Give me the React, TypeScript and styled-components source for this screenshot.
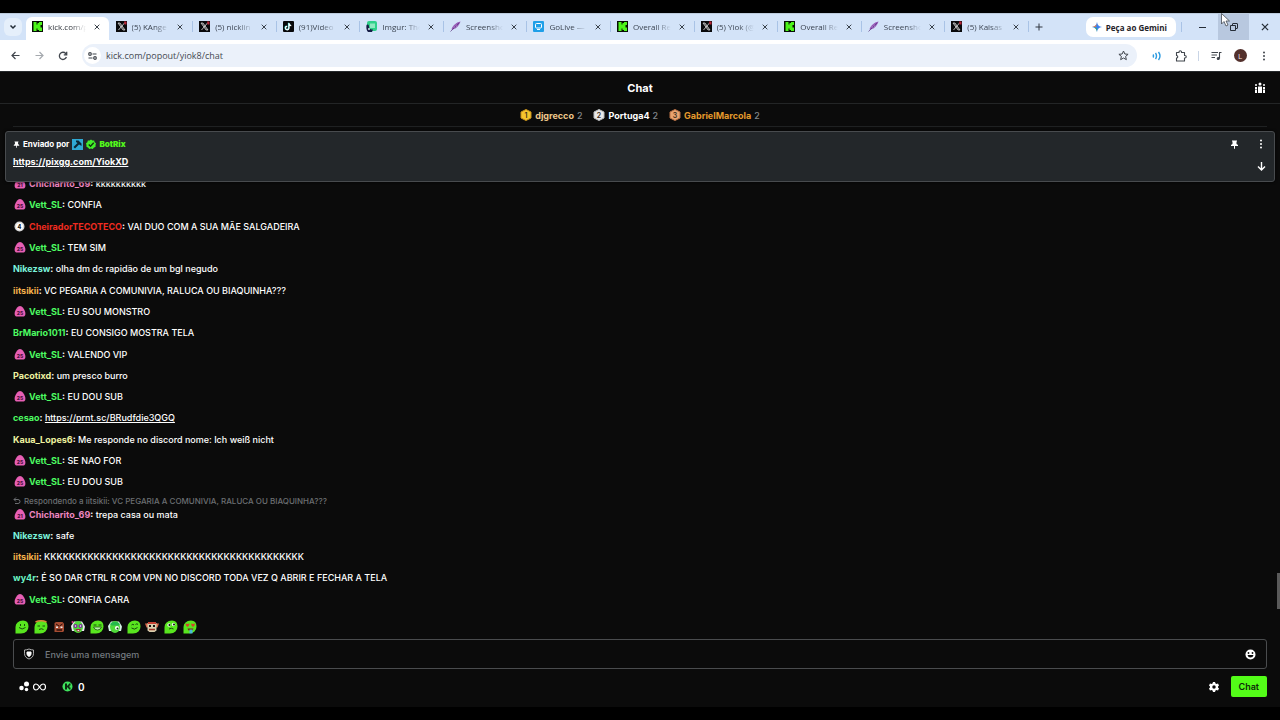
import React from "react";
import styled, { createGlobalStyle } from "styled-components";

const GlobalStyle = createGlobalStyle`
  *, *::before, *::after { box-sizing: border-box; }
  body { margin: 0; background: #000; }
  button, input { font: inherit; color: inherit; }
  button { border: 0; padding: 0; background: none; cursor: pointer; }
  svg { display: block; flex: none; }
`;

const ui = `"Open Sans", "Noto Sans", sans-serif`;
const inter = `Inter, "Liberation Sans", sans-serif`;

const Screen = styled.div`
  min-height: 100vh;
  display: flex;
  flex-direction: column;
  padding: 13px 0;
  background: #000;
  overflow: hidden;
`;

/* ---------- browser chrome ---------- */

const TabStrip = styled.div`
  display: flex;
  align-items: stretch;
  height: 27px;
  background: #d3e3f8;
  border-top: 1px solid #bccbdc;
  font-family: ${ui};
  font-size: 8px;
  color: #3b4451;
`;

const TabSearch = styled.button`
  align-self: center;
  display: grid;
  place-items: center;
  width: 18px;
  height: 18px;
  margin: 0 4px;
  border-radius: 6px;
  background: #e5effb;
  color: #222b36;
`;

const Tabs = styled.div`
  display: flex;
  flex: 0 1 1003px;
  min-width: 0;
  padding-top: 3px;
`;

const TabItem = styled.div<{ $active?: boolean }>`
  position: relative;
  flex: 1 1 0;
  min-width: 0;
  display: flex;
  align-items: center;
  gap: 5px;
  padding: 0 7px 4px 6px;
  ${(p) =>
    p.$active
      ? `background: #fff; border-radius: 6px 6px 0 0; margin-right: 1px; color: #2c3138; padding-right: 6px;`
      : `&::after { content: ""; position: absolute; right: 0; top: 4px; width: 1px; height: 11px; background: #a9c3e6; }`}
`;

const TabTitle = styled.span`
  flex: 1;
  min-width: 0;
  overflow: hidden;
  white-space: nowrap;
  line-height: 12px;
  mask-image: linear-gradient(90deg, #000 60%, transparent);
`;

const TabClose = styled.button`
  display: grid;
  place-items: center;
  width: 12px;
  height: 12px;
  color: #303740;
`;

const NewTab = styled.button`
  display: grid;
  place-items: center;
  width: 20px;
  color: #303740;
`;

const WindowArea = styled.div`
  display: flex;
  margin-left: auto;
`;

const GeminiButton = styled.button`
  display: flex;
  align-items: center;
  align-self: center;
  gap: 4px;
  height: 20px;
  padding: 0 9px 0 6px;
  border-radius: 7px;
  background: #fff;
  color: #1f2329;
  font-size: 8px;
  font-weight: 700;
  white-space: nowrap;
`;

const Divider = styled.span<{ $color: string }>`
  align-self: center;
  width: 1px;
  height: 10px;
  margin: 0 5px;
  background: ${(p) => p.$color};
`;

const WindowButton = styled.button<{ $hover?: boolean }>`
  display: grid;
  place-items: center;
  width: 31px;
  color: #252c36;
  background: ${(p) => (p.$hover ? "#b8c8df" : "transparent")};
`;

const Toolbar = styled.div`
  display: flex;
  align-items: center;
  height: 31px;
  padding: 0 4px 0 3px;
  background: #fff;
  color: #41464d;
`;

const ToolButton = styled.button`
  display: grid;
  place-items: center;
  width: 24px;
  height: 22px;
`;

const AddressBar = styled.label`
  flex: 1;
  display: flex;
  align-items: center;
  gap: 5px;
  height: 23px;
  margin: 0 8px 0 7px;
  padding: 0 2px;
  border-radius: 12px;
  background: #ebf1fa;
  font-family: ${ui};
  font-size: 9px;
`;

const SiteInfo = styled.span`
  display: grid;
  place-items: center;
  width: 17px;
  height: 17px;
  border-radius: 50%;
  background: #fff;
`;

const AddressInput = styled.input`
  flex: 1;
  min-width: 0;
  border: 0;
  padding: 0;
  outline: 0;
  background: none;
  color: #454a52;
`;

const Avatar = styled.span`
  display: grid;
  place-items: center;
  width: 13px;
  height: 13px;
  border-radius: 50%;
  background: #53302c;
  color: #f2e6e4;
  font: 8px/13px ${ui};
`;

const Cursor = styled.svg`
  position: absolute;
  top: 13px;
  right: 50px;
`;

/* ---------- chat ---------- */

const Chat = styled.main`
  flex: 1;
  display: flex;
  flex-direction: column;
  background: #0b0b0b;
  color: #fff;
  font-family: ${inter};
  font-size: 9px;
  font-weight: 500;
  border-top: 1px solid #26292c;
`;

const ChatHeader = styled.header`
  display: grid;
  grid-template-columns: 1fr auto 1fr;
  align-items: center;
  height: 32px;
  padding: 0 14px;
  border-bottom: 1px solid #232526;
`;

const Title = styled.h1`
  grid-column: 2;
  margin: 0;
  font-size: 11px;
  font-weight: 700;
`;

const Viewers = styled.button`
  justify-self: end;
`;

const Leaderboard = styled.ol`
  display: flex;
  justify-content: center;
  align-items: center;
  gap: 11px;
  height: 23px;
  margin: 0 13px 4px;
  padding: 0;
  list-style: none;
  border-bottom: 1px solid #1f2122;
  color: #83888c;
`;

const Leader = styled.li<{ $color: string }>`
  display: flex;
  align-items: center;
  gap: 3px;
  b { color: ${(p) => p.$color}; font-weight: 700; }
`;

const Pinned = styled.section`
  position: relative;
  z-index: 1;
  display: flex;
  justify-content: space-between;
  height: 51px;
  margin: 0 5px;
  padding: 6px 7px;
  border: 1px solid #484b4e;
  border-radius: 3px;
  background: #23272a;
  box-shadow: 0 0 3px #000;
`;

const PinnedBy = styled.div`
  display: flex;
  align-items: center;
  gap: 3px;
  height: 12px;
  margin-bottom: 6px;
  font-size: 8px;
  font-weight: 700;
  b { color: #53f71c; }
`;

const ChatLink = styled.a<{ $strong?: boolean }>`
  color: inherit;
  font-weight: ${(p) => (p.$strong ? 700 : 500)};
  text-decoration: underline;
`;

const PinnedActions = styled.div`
  display: grid;
  grid-template-columns: 12px 12px;
  gap: 10px 15px;
  align-content: start;
  button { display: grid; place-items: center; height: 12px; }
  button:last-child { grid-column: 2; }
`;

const MessageArea = styled.section`
  position: relative;
  flex: 1;
  display: flex;
  margin-top: -9px;
`;

const Messages = styled.ul`
  flex: 1;
  display: flex;
  flex-direction: column;
  margin: 0;
  padding: 0 13px;
  list-style: none;
`;

const MessageItem = styled.li`
  flex: 1 0 auto;
  display: flex;
  flex-direction: column;
  justify-content: center;
`;

const Reply = styled.div`
  display: flex;
  align-items: center;
  gap: 3px;
  height: 11px;
  margin: 3px 0 -3px;
  color: #6c6f72;
  font-size: 8px;
`;

const Line = styled.div`
  display: flex;
  align-items: center;
  height: 21px;
`;

const BadgeSlot = styled.span`
  display: flex;
  width: 16px;
  padding-left: 1px;
`;

const Name = styled.b<{ $color: string }>`
  color: ${(p) => p.$color};
  font-weight: 700;
`;

const ScrollThumb = styled.div`
  position: absolute;
  right: 0;
  bottom: 1px;
  width: 3px;
  height: 36px;
  background: #5a5a5a;
`;

const Emotes = styled.div`
  display: grid;
  grid-template-columns: repeat(10, 1fr);
  justify-items: center;
  align-items: center;
  width: 186px;
  height: 18px;
  margin: 8px 13px 3px;
`;

const Composer = styled.form`
  padding: 0 13px 10px;
`;

const Field = styled.label`
  display: flex;
  align-items: center;
  gap: 10px;
  height: 30px;
  padding: 0 10px 0 9px;
  border: 1px solid #4a4c4e;
  border-radius: 3px;
`;

const MessageInput = styled.input`
  flex: 1;
  min-width: 0;
  border: 0;
  padding: 0;
  outline: 0;
  background: none;
  font-size: 9px;
  &::placeholder { color: #757b80; opacity: 1; }
`;

const ComposerFooter = styled.div`
  display: flex;
  align-items: center;
  margin-top: 7px;
  padding-left: 6px;
`;

const Points = styled.button`
  display: flex;
  align-items: center;
  gap: 3px;
  font-size: 10px;
  font-weight: 600;
`;

const KickPoints = styled(Points)`
  gap: 5px;
  margin: 0 auto 0 16px;
`;

const SendButton = styled.button`
  height: 21px;
  margin-left: 11px;
  padding: 0 8px;
  border-radius: 2px;
  background: #53fc18;
  color: #0c2a08;
  font-size: 9px;
  font-weight: 600;
`;

/* ---------- drawings ---------- */

const CloseIcon = ({ size = 7 }: { size?: number }) => (
  <svg width={size} height={size} viewBox="0 0 7 7" fill="none" stroke="currentColor" strokeWidth="1.1">
    <path d="M.8.8l5.4 5.4M6.2.8L.8 6.2" />
  </svg>
);

type SiteKind = "kick" | "x" | "tiktok" | "imgur" | "feather" | "golive";

const SiteIcon = ({ kind }: { kind: SiteKind }) => (
  <svg width="11" height="11" viewBox="0 0 22 22">
    {kind === "kick" && (
      <>
        <path d="M0 0h22v22H0z" fill="#081006" />
        <path d="M3 2h6v5h2V4h3V2h6v6h-3v5h3v7h-6v-2h-3v-3H9v5H3z" fill="#4cf51a" />
      </>
    )}
    {kind === "x" && (
      <>
        <path d="M0 0h22v22H0z" fill="#0a0a0c" />
        <path d="M4 4h4l10 14h-4z" fill="#555" stroke="#d8d8d8" strokeWidth="1.5" />
        <path d="M17 4L5 18" stroke="#d8d8d8" strokeWidth="1.7" />
        <path d="M16 1h5v6h-4z" fill="#ba2638" />
      </>
    )}
    {kind === "tiktok" && (
      <>
        <rect width="22" height="22" rx="2" fill="#08080a" />
        <path d="M12 4v10a3.5 3.5 0 1 1-3.5-3.5M12 4.5c0 3 2 4.5 4.500 4.500" fill="none" stroke="#28e0dc" strokeWidth="2.5" transform="translate(-1 -.5)" />
        <path d="M12 4v10a3.5 3.5 0 1 1-3.5-3.5M12 4.5c0 3 2 4.5 4.500 4.500" fill="none" stroke="#fff" strokeWidth="2.5" />
      </>
    )}
    {kind === "imgur" && (
      <>
        <rect x="2" width="20" height="20" rx="4" fill="#2fd08a" />
        <path d="M8 5h10v9H8z" fill="#8eeac1" />
        <path d="M1 8c4-2 5 0 5 4s4 5 8 5l-2 5H4c-3-3-4-9-3-14z" fill="#171f47" />
        <circle cx="6" cy="16" r="2" fill="#d6e8ef" />
      </>
    )}
    {kind === "feather" && (
      <>
        <path d="M21 1C12 3 5 9 3 17c7 0 14-5 18-16z" fill="#9357b5" />
        <path d="M1 21L18 4" stroke="#5c3480" strokeWidth="1.4" />
        <path d="M8 10l1 5M12 7l1 5" stroke="#c3a0d8" />
      </>
    )}
    {kind === "golive" && (
      <>
        <rect width="22" height="22" rx="2" fill="#1f9fe8" />
        <rect x="5" y="5" width="12" height="9" rx="2" fill="none" stroke="#fff" strokeWidth="2" />
        <path d="M8 17h6" stroke="#fff" strokeWidth="2" />
      </>
    )}
  </svg>
);

const HexMedal = ({ fill, edge, rank }: { fill: string; edge: string; rank: number }) => (
  <svg width="12" height="12" viewBox="0 0 24 24">
    <path d="M12 1l10 5v12l-10 5-10-5V6z" fill={fill} stroke={edge} strokeWidth="2" strokeLinejoin="round" />
    <text x="12" y="17" textAnchor="middle" fontSize="14" fontWeight="600" fill="#3a2c1a">{rank}</text>
  </svg>
);

const SubBadge = ({ label }: { label: string }) =>
  label === "4" ? (
    <svg width="11" height="11" viewBox="0 0 22 22">
      <circle cx="11" cy="11" r="10" fill="#d9d9d9" />
      <circle cx="11" cy="11" r="7" fill="#fff" />
      <text x="11" y="15" textAnchor="middle" fontSize="11" fontWeight="800" fill="#111">4</text>
    </svg>
  ) : (
    <svg width="12" height="11" viewBox="0 0 24 22">
      <path d="M12 0C7 0 4 5 2 11c-2 6 0 10 4 10h12c4 0 6-4 4-10C20 5 17 0 12 0z" fill="#e75fb4" />
      <text x="12" y="17" textAnchor="middle" fontSize="10" fontWeight="800" fill="#4a0d3a">{label}</text>
    </svg>
  );

const PinIcon = ({ size = 9 }: { size?: number }) => (
  <svg width={size} height={size} viewBox="0 0 18 18" fill="currentColor">
    <path d="M4 1h10v2h-1v5l3 2v2h-6v5l-1 1-1-1v-5H2v-2l3-2V3H4z" />
  </svg>
);

const DotsIcon = () => (
  <svg width="4" height="12" viewBox="0 0 4 12" fill="currentColor">
    <circle cx="2" cy="2.5" r="1" /><circle cx="2" cy="6" r="1" /><circle cx="2" cy="9.500" r="1" />
  </svg>
);

type EmoteKind = "smile" | "halo" | "box" | "clown" | "grin" | "cap" | "calm" | "ears" | "think" | "love";
const blob = "M5 5Q9 1 16 1q11 0 11 12 0 6-4 10-4 4-11 4H1V14q0-6 4-9z";

const Emote = ({ kind }: { kind: EmoteKind }) => (
  <svg width="14" height="14" viewBox="0 0 28 28">
    {kind === "box" ? (
      <>
        <path d="M5 6l3-2h13l3 3v15l-2 2H5z" fill="#a64c32" />
        <path d="M8 8l6 4M21 8l-6 4" stroke="#2b0e09" strokeWidth="2" />
        <path d="M8 13h4v3H8zM17 13h4v3h-4z" fill="#eee" />
        <path d="M9 20h11" stroke="#2b0e09" strokeWidth="3" />
      </>
    ) : kind === "ears" ? (
      <>
        <path d="M0 7h28l-3 8H3z" fill="#dc6a4d" />
        <path d="M5 6h18v15l-4 3H9l-4-3z" fill="#d9cfae" />
        <path d="M6 4h16v4H6z" fill="#c64233" />
        <path d="M8 10h4v4H8zM16 10h4v4h-4z" fill="#1a1110" />
        <path d="M8 19h12" stroke="#a03527" strokeWidth="3" />
      </>
    ) : (
      <>
        {(kind === "clown" || kind === "cap") && (
          <path d="M6 3h16l6 10-2 9H2L0 12z" fill={kind === "clown" ? "#ece6f2" : "#d4f4e6"} />
        )}
        {kind === "clown" || kind === "cap" ? (
          <ellipse cx="14" cy="14" rx="10" ry="12" fill="#4fd93a" />
        ) : (
          <path d={blob} fill="#58e51f" />
        )}
        {kind === "smile" && <path d="M11 8v4M19 8v4M8 15q6 6 13 0" stroke="#174c0a" strokeWidth="2" fill="none" />}
        {kind === "halo" && (
          <>
            <path d="M3 4q11-5 22 0" stroke="#d8863a" strokeWidth="3" fill="none" />
            <path d="M7 12h5M17 12h5M10 19q5-3 9 0" stroke="#174c0a" strokeWidth="2" fill="none" />
          </>
        )}
        {kind === "clown" && (
          <>
            <circle cx="9" cy="12" r="4" fill="#7a2b9c" /><circle cx="19" cy="12" r="4" fill="#7a2b9c" />
            <circle cx="9" cy="12" r="1.5" fill="#fff" /><circle cx="19" cy="12" r="1.5" fill="#fff" />
            <path d="M10 19h9l-4 5z" fill="#eee" stroke="#a0243e" strokeWidth="2" />
            <circle cx="3" cy="4" r="2" fill="#d93f83" />
          </>
        )}
        {kind === "grin" && (
          <>
            <path d="M7 10h6M17 10h6" stroke="#174c0a" strokeWidth="2" />
            <path d="M7 14h16q-2 6-8 6t-8-6z" fill="#b9f3a6" stroke="#174c0a" strokeWidth="1.5" />
          </>
        )}
        {kind === "cap" && (
          <>
            <path d="M4 8q9-9 20 0l-3 3H7z" fill="#24b84c" />
            <circle cx="18" cy="16" r="4" fill="#fff" /><circle cx="19" cy="17" r="2" fill="#123a14" />
          </>
        )}
        {kind === "calm" && <path d="M9 10q3-3 5 0M17 9q3-3 5 0M9 16q6 5 12-1" stroke="#174c0a" strokeWidth="2" fill="none" />}
        {kind === "think" && (
          <>
            <circle cx="10" cy="10" r="3.500" fill="#e9fbe2" /><circle cx="19" cy="9" r="3.500" fill="#e9fbe2" />
            <circle cx="11" cy="10" r="2" fill="#111" /><circle cx="20" cy="9" r="2" fill="#111" />
            <path d="M10 18q5-3 9 0" stroke="#174c0a" strokeWidth="2" fill="none" />
          </>
        )}
        {kind === "love" && (
          <>
            <path d="M5 7l4 1 4-1-1 4-3 3-3-3zM16 7l4 1 4-1-1 4-3 3-3-3z" fill="#d8402b" />
            <path d="M9 17h12l-2 4h-8z" fill="#7c2413" />
            <path d="M13 19h6v8h-6z" fill="#48b8d8" />
          </>
        )}
      </>
    )}
  </svg>
);

/* ---------- data ---------- */

const tabs: { icon: SiteKind; title: string }[] = [
  { icon: "kick", title: "kick.com/p" },
  { icon: "x", title: "(5) KAnge" },
  { icon: "x", title: "(5) nicklin" },
  { icon: "tiktok", title: "(91)Vídeo" },
  { icon: "imgur", title: "Imgur: The" },
  { icon: "feather", title: "Screensho" },
  { icon: "golive", title: "GoLive —" },
  { icon: "kick", title: "Overall Re" },
  { icon: "x", title: "(5) Yiok (@" },
  { icon: "kick", title: "Overall Re" },
  { icon: "feather", title: "Screensho" },
  { icon: "x", title: "(5) Kaisas" },
];

type Message = { name: string; color: string; text: string; badge?: string; link?: boolean; reply?: string };

const vett = (text: string): Message => ({ name: "Vett_SL", color: "#4dfb62", text, badge: "25" });
const niko = (text: string): Message => ({ name: "Nikezsw", color: "#7bf3dc", text });
const chicharito = (text: string, reply?: string): Message => ({
  name: "Chicharito_69", color: "#ee86c0", text, badge: "21", reply,
});

const messages: Message[] = [
  chicharito("kkkkkkkkkk"),
  vett("CONFIA"),
  { name: "CheiradorTECOTECO", color: "#ef2b20", text: "VAI DUO COM A SUA MÃE SALGADEIRA", badge: "4" },
  vett("TEM SIM"),
  niko("olha dm dc rapidão de um bgl negudo"),
  { name: "iitsikii", color: "#f5b34c", text: "VC PEGARIA A COMUNIVIA, RALUCA OU BIAQUINHA???" },
  vett("EU SOU MONSTRO"),
  { name: "BrMario1011", color: "#4dfb62", text: "EU CONSIGO MOSTRA TELA" },
  vett("VALENDO VIP"),
  { name: "Pacotixd", color: "#eef2a0", text: "um presco burro" },
  vett("EU DOU SUB"),
  { name: "cesao", color: "#4dfb62", text: "https://prnt.sc/BRudfdie3QGQ", link: true },
  { name: "Kaua_Lopes6", color: "#eef2a0", text: "Me responde no discord nome: Ich weiß nicht" },
  vett("SE NAO FOR"),
  vett("EU DOU SUB"),
  chicharito("trepa casa ou mata", "Respondendo a iitsikii: VC PEGARIA A COMUNIVIA, RALUCA OU BIAQUINHA???"),
  niko("safe"),
  { name: "iitsikii", color: "#f5b34c", text: "KKKKKKKKKKKKKKKKKKKKKKKKKKKKKKKKKKKKKKKKKK" },
  { name: "wy4r", color: "#6bf5c4", text: "É SO DAR CTRL R COM VPN NO DISCORD TODA VEZ Q ABRIR E FECHAR A TELA" },
  vett("CONFIA CARA"),
];

const leaders = [
  { name: "djgrecco", color: "#efc88c", fill: "#f6c52d", edge: "#c9921c" },
  { name: "Portuga4", color: "#ffffff", fill: "#e8e9ea", edge: "#b9bcbe" },
  { name: "GabrielMarcola", color: "#e59a2c", fill: "#e9a470", edge: "#b97145" },
];

const emotes: EmoteKind[] = ["smile", "halo", "box", "clown", "grin", "cap", "calm", "ears", "think", "love"];

/* ---------- page ---------- */

const BrowserChrome = () => (
  <>
    <TabStrip>
      <TabSearch aria-label="Pesquisar guias">
        <svg width="8" height="6" viewBox="0 0 8 6" fill="none" stroke="currentColor" strokeWidth="1.5"><path d="M1.500 1.500L4 4l2.500-2.500" /></svg>
      </TabSearch>
      <Tabs>
        {tabs.map((t, i) => (
          <TabItem key={i} $active={i === 0}>
            <SiteIcon kind={t.icon} />
            <TabTitle>{t.title}</TabTitle>
            <TabClose aria-label="Fechar guia"><CloseIcon size={6} /></TabClose>
          </TabItem>
        ))}
      </Tabs>
      <NewTab aria-label="Nova guia">
        <svg width="8" height="8" viewBox="0 0 8 8" stroke="currentColor"><path d="M4 .5v7M.5 4h7" /></svg>
      </NewTab>
      <WindowArea>
        <GeminiButton>
          <svg width="10" height="10" viewBox="0 0 20 20">
            <path d="M10 0q1 9 10 10-9 1-10 10-1-9-10-10 9-1 10-10z" fill="#3b82ee" />
            <path d="M10 0q-1 9-10 10l8 0z" fill="#e2794b" />
            <path d="M0 10q9 1 10 10V12z" fill="#3ca873" />
          </svg>
          Peça ao Gemini
        </GeminiButton>
        <Divider $color="#a9c3e6" />
        <WindowButton aria-label="Minimizar">
          <svg width="7" height="7" viewBox="0 0 7 7" stroke="currentColor"><path d="M0 3.500h7" /></svg>
        </WindowButton>
        <WindowButton aria-label="Restaurar" $hover>
          <svg width="8" height="8" viewBox="0 0 8 8" fill="none" stroke="currentColor">
            <path d="M.5 2.500h5v5h-5zM2.500 2V1q0-.5.5-.5h4q.5 0 .5.5v4q0 .5-.5.500H6" />
          </svg>
        </WindowButton>
        <WindowButton aria-label="Fechar"><CloseIcon size={8} /></WindowButton>
      </WindowArea>
    </TabStrip>
    <Toolbar>
      <ToolButton aria-label="Voltar">
        <svg width="9" height="9" viewBox="0 0 9 9" fill="none" stroke="currentColor" strokeWidth="1.2"><path d="M8.500 4.500H1M4.500 1L1 4.500 4.500 8" /></svg>
      </ToolButton>
      <ToolButton aria-label="Avançar">
        <svg width="9" height="9" viewBox="0 0 9 9" fill="none" stroke="#a5a9ae" strokeWidth="1.2"><path d="M.5 4.500H8M4.500 1L8 4.500 4.500 8" /></svg>
      </ToolButton>
      <ToolButton aria-label="Recarregar">
        <svg width="10" height="10" viewBox="0 0 10 10" fill="none" stroke="currentColor" strokeWidth="1.3"><path d="M8.400 6A3.600 3.600 0 1 1 7.700 2.500L8.500 3.400M8.700.8v3H5.800" /></svg>
      </ToolButton>
      <AddressBar>
        <SiteInfo>
          <svg width="9" height="8" viewBox="0 0 9 8" fill="none" stroke="currentColor" strokeWidth="1.2">
            <circle cx="2" cy="2" r="1.3" /><path d="M4.500 2H8.500M.5 6h4" /><circle cx="7" cy="6" r="1.3" />
          </svg>
        </SiteInfo>
        <AddressInput aria-label="Endereço" defaultValue="kick.com/popout/yiok8/chat" />
        <ToolButton aria-label="Favoritar">
          <svg width="11" height="11" viewBox="0 0 22 22" fill="none" stroke="currentColor" strokeWidth="2"><path d="M11 2l2.700 6 6.500.600-5 4.300 1.500 6.400L11 16l-5.700 3.300 1.500-6.400-5-4.300 6.500-.600z" /></svg>
        </ToolButton>
      </AddressBar>
      <ToolButton aria-label="Áudio">
        <svg width="10" height="10" viewBox="0 0 20 20" fill="none" stroke="#2d9be0" strokeWidth="2.8"><path d="M2 7q2 3 0 6M7 4q4 6 0 12M13 2q6 8 0 16" /></svg>
      </ToolButton>
      <ToolButton aria-label="Extensões">
        <svg width="12" height="12" viewBox="0 0 24 24" fill="none" stroke="currentColor" strokeWidth="2.2" strokeLinejoin="round">
          <path d="M3 5h5V4a2 2 0 0 1 5 0v1h6v6h1a2 2 0 0 1 0 5h-1v6H3v-6a2.500 2.500 0 0 0 0-5z" />
        </svg>
      </ToolButton>
      <Divider $color="#c9d5e6" />
      <ToolButton aria-label="Mídia">
        <svg width="11" height="10" viewBox="0 0 22 20" fill="none" stroke="currentColor" strokeWidth="2.2">
          <path d="M1 3h13M1 8h11M1 13h7M17 15V3h4" /><circle cx="14.500" cy="15" r="2" fill="currentColor" />
        </svg>
      </ToolButton>
      <ToolButton aria-label="Perfil"><Avatar>L</Avatar></ToolButton>
      <ToolButton aria-label="Menu"><DotsIcon /></ToolButton>
    </Toolbar>
    <Cursor width="9" height="14" viewBox="0 0 18 28">
      <path d="M1 1v21l5-5 4 9 4-2-4-8h7z" fill="#fff" stroke="#3b4048" strokeWidth="1.5" />
    </Cursor>
  </>
);

export default function App() {
  return (
    <Screen>
      <GlobalStyle />
      <BrowserChrome />
      <Chat>
        <ChatHeader>
          <Title>Chat</Title>
          <Viewers aria-label="Espectadores">
            <svg width="12" height="12" viewBox="0 0 24 24" fill="#fff">
              <circle cx="12" cy="4" r="3" /><circle cx="4" cy="6" r="2" /><circle cx="20" cy="6" r="2" />
              <path d="M8 9h8v13H8zM2 10h4v4H2zM2 15h4v7H2zM18 10h4v4h-4zM18 15h4v7h-4z" />
            </svg>
          </Viewers>
        </ChatHeader>
        <Leaderboard>
          {leaders.map((l, i) => (
            <Leader key={l.name} $color={l.color}>
              <HexMedal fill={l.fill} edge={l.edge} rank={i + 1} />
              <b>{l.name}</b>
              <span>2</span>
            </Leader>
          ))}
        </Leaderboard>
        <Pinned>
          <div>
            <PinnedBy>
              <PinIcon size={7} />
              <span>Enviado por</span>
              <svg width="11" height="11" viewBox="0 0 22 22">
                <path d="M0 0h22v22H0z" fill="#2fa9d3" />
                <path d="M8 3h5l6 6v5l-3-2-2-1-8 8-3-3 8-8-3-2z" fill="#0b2733" />
              </svg>
              <svg width="10" height="11" viewBox="0 0 22 22">
                <path d="M11 0l3 2 4 0 1 4 3 2-1 4 0 4-4 2-2 3-4-1-4 1-2-3-4-2 0-4-1-4 3-2 1-4 4 0z" fill="#42f02a" />
                <path d="M6 11l4 4 7-8" fill="none" stroke="#12330d" strokeWidth="3" />
              </svg>
              <b>BotRix</b>
            </PinnedBy>
            <ChatLink $strong href="https://pixgg.com/YiokXD">https://pixgg.com/YiokXD</ChatLink>
          </div>
          <PinnedActions>
            <button aria-label="Fixar"><PinIcon /></button>
            <button aria-label="Opções"><DotsIcon /></button>
            <button aria-label="Expandir">
              <svg width="9" height="9" viewBox="0 0 9 9" fill="none" stroke="currentColor" strokeWidth="1.4"><path d="M4.500 0v8M1 4.500L4.500 8 8 4.500" /></svg>
            </button>
          </PinnedActions>
        </Pinned>
        <MessageArea>
          <Messages>
            {messages.map((m, i) => (
              <MessageItem key={i}>
                {m.reply && (
                  <Reply>
                    <svg width="8" height="8" viewBox="0 0 16 16" fill="none" stroke="currentColor" strokeWidth="2"><path d="M6 1L2 5l4 4M2 5h8q4 0 4 4t-4 4H4" /></svg>
                    {m.reply}
                  </Reply>
                )}
                <Line>
                  {m.badge && <BadgeSlot><SubBadge label={m.badge} /></BadgeSlot>}
                  <span>
                    <Name $color={m.color}>{m.name}</Name>
                    <b>:</b>{" "}
                    {m.link ? <ChatLink href={m.text}>{m.text}</ChatLink> : m.text}
                  </span>
                </Line>
              </MessageItem>
            ))}
          </Messages>
          <ScrollThumb />
        </MessageArea>
        <Emotes>{emotes.map((k) => <Emote key={k} kind={k} />)}</Emotes>
        <Composer onSubmit={(e) => e.preventDefault()}>
          <Field>
            <svg width="12" height="12" viewBox="0 0 24 24">
              <path d="M12 2q5 2 9 2v7q0 8-9 11-9-3-9-11V4q4 0 9-2z" fill="none" stroke="#d6d6d6" strokeWidth="1.6" />
              <path d="M8 8h8v4q0 3-4 5-4-2-4-5z" fill="#fff" stroke="#fff" strokeWidth="2" strokeLinejoin="round" />
            </svg>
            <MessageInput aria-label="Mensagem" placeholder="Envie uma mensagem" />
            <button type="button" aria-label="Emotes">
              <svg width="11" height="11" viewBox="0 0 22 22">
                <circle cx="11" cy="11" r="10" fill="#fff" />
                <circle cx="7" cy="8" r="1.8" fill="#0b0b0b" /><circle cx="15" cy="8" r="1.8" fill="#0b0b0b" />
                <path d="M5 12h12q-1 5-6 5t-6-5z" fill="#0b0b0b" />
              </svg>
            </button>
          </Field>
          <ComposerFooter>
            <Points type="button" aria-label="Pontos ilimitados">
              <svg width="11" height="11" viewBox="0 0 22 22" fill="#fff">
                <circle cx="15" cy="6" r="5" /><circle cx="5" cy="14" r="4.5" /><circle cx="15" cy="17" r="3.5" />
              </svg>
              <svg width="13" height="8" viewBox="0 0 26 16" fill="none" stroke="#fff" strokeWidth="2.4">
                <path d="M13 8C10 3 8 2 6 2a5 6 0 0 0 0 12c2 0 4-1 7-6s5-6 7-6a5 6 0 0 1 0 12c-2 0-4-1-7-6z" />
              </svg>
            </Points>
            <KickPoints type="button">
              <svg width="11" height="11" viewBox="0 0 22 22">
                <circle cx="11" cy="11" r="10" fill="#3fe35d" />
                <path d="M6 5h4v4h2V7h2V5h3v4h-2v4h2v4h-3v-2h-2v-2h-2v4H6z" fill="#0b2a10" />
              </svg>
              0
            </KickPoints>
            <button type="button" aria-label="Configurações">
              <svg width="12" height="12" viewBox="0 0 24 24">
                <path d="M10 2h4l1 3 2 1 3-1 2 4-2 2v2l2 2-2 4-3-1-2 1-1 3h-4l-1-3-2-1-3 1-2-4 2-2v-2L2 9l2-4 3 1 2-1z" fill="#fff" />
                <circle cx="12" cy="12" r="3.5" fill="#0b0b0b" />
              </svg>
            </button>
            <SendButton type="submit">Chat</SendButton>
          </ComposerFooter>
        </Composer>
      </Chat>
    </Screen>
  );
}
